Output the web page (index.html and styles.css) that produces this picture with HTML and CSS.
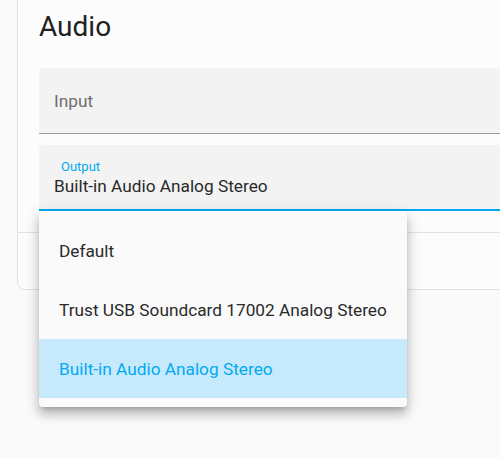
FILE: index.html
```html
<!DOCTYPE html>
<html lang="en">
<head>
<meta charset="utf-8">
<title>Audio</title>
<link rel="stylesheet" href="styles.css">
</head>
<body>
<div class="card">
  <div class="card-header">Audio</div>
  <div class="card-content">
    <div class="field">
      <span class="field-placeholder">Input</span>
    </div>
    <div class="field field-focused">
      <div class="field-stack">
        <span class="field-label">Output</span>
        <span class="field-value">Built-in Audio Analog Stereo</span>
      </div>
    </div>
  </div>
  <div class="card-actions"></div>
</div>
<ul class="menu">
  <li class="menu-item">Default</li>
  <li class="menu-item">Trust USB Soundcard 17002 Analog Stereo</li>
  <li class="menu-item menu-item-selected">Built-in Audio Analog Stereo</li>
</ul>
</body>
</html>
```
FILE: styles.css
```css
html, body {
  margin: 0;
  padding: 0;
}
body {
  background: #fafafa;
  font-family: Roboto, "Noto Sans", sans-serif;
  color: rgba(0, 0, 0, 0.87);
  overflow: hidden;
  width: 500px;
  height: 458px;
  position: relative;
}
.card {
  margin: 0 0 0 17px;
  background: #fcfcfc;
  border: 1px solid #e2e2e2;
  border-top: none;
  border-right: none;
  border-radius: 0 0 0 8px;
}
.card-header {
  padding: 9px 0 0 21px;
  font-size: 28px;
  line-height: 36px;
  color: #212121;
}
.card-content {
  padding: 23px 0 21px 21px;
}
.field {
  box-sizing: border-box;
  height: 66px;
  background: #f3f3f3;
  border-bottom: 1px solid #9a9a9a;
  border-radius: 4px 0 0 0;
  padding-left: 15px;
  display: flex;
  align-items: center;
}
.field + .field {
  margin-top: 11px;
}
.field-placeholder {
  font-size: 17.25px;
  color: #6e6e6e;
}
.field-focused {
  border-bottom: 2px solid #03a9f4;
  align-items: flex-start;
}
.field-stack {
  display: flex;
  flex-direction: column;
  padding-top: 14px;
}
.field-label {
  font-size: 13px;
  line-height: 15px;
  color: #03a9f4;
  padding-left: 7px;
}
.field-value {
  font-size: 17.25px;
  line-height: 21px;
  margin-top: 2px;
  color: #2a2a2a;
}
.card-actions {
  border-top: 1px solid #e2e2e2;
  height: 56px;
}
.menu {
  position: absolute;
  left: 39px;
  top: 211px;
  width: 368px;
  margin: 0;
  padding: 10px 0 9px;
  list-style: none;
  background: #fafafa;
  border-radius: 4px;
  box-shadow: 0 5px 5px -3px rgba(0, 0, 0, 0.2), 0 8px 10px 1px rgba(0, 0, 0, 0.14), 0 3px 14px 2px rgba(0, 0, 0, 0.12);
}
.menu-item {
  height: 59px;
  display: flex;
  align-items: center;
  padding-left: 20px;
  font-size: 17.25px;
  color: #2a2a2a;
}
.menu-item-selected {
  background: #c6eafc;
  color: #03a9f4;
}
```
